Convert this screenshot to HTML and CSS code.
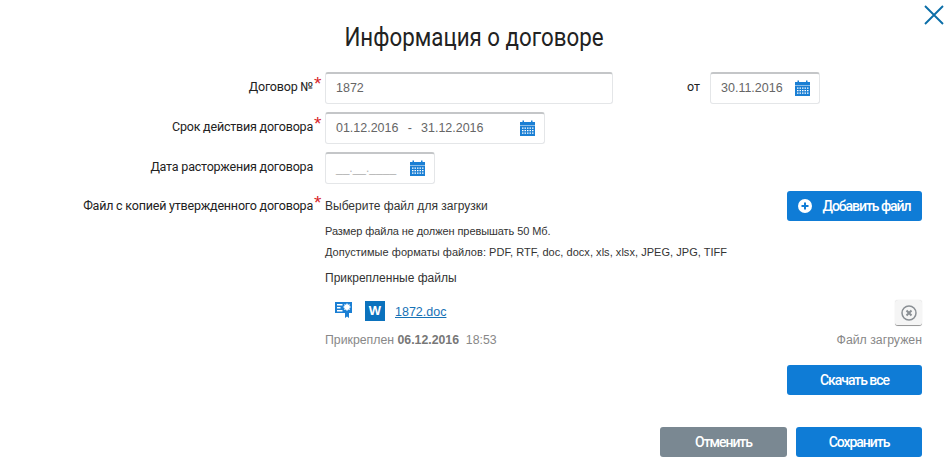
FILE: index.html
```html
<!DOCTYPE html>
<html lang="ru">
<head>
<meta charset="utf-8">
<title>Информация о договоре</title>
<link rel="stylesheet" href="styles.css">
</head>
<body>
<svg class="defs" width="0" height="0"><defs>
<symbol id="cal" viewBox="0 0 15 16">
<path fill="#1a7fd4" d="M0 2h2.500V0.500h1.500V2h7V0.500h1.500V2H15v3.500H0z"/>
<path fill="#1a7fd4" fill-rule="evenodd" d="M0 6h15v10H0zM2 7.500v1.200h1.500V7.500zM4.500 7.500v1.200h1.500V7.500zM7 7.500v1.200h1.500V7.500zM9.500 7.500v1.200h1.500V7.500zM12 7.500v1.200h1.500V7.500zM2 10v1.200h1.500V10zM4.500 10v1.200h1.500V10zM7 10v1.200h1.500V10zM9.500 10v1.200h1.500V10zM12 10v1.200h1.500V10zM2 12.500v1.200h1.500v-1.200zM4.500 12.500v1.200h1.500v-1.200zM7 12.500v1.200h1.500v-1.200zM9.500 12.500v1.200h1.500v-1.200zM12 12.500v1.200h1.500v-1.200z"/>
</symbol>
</defs></svg>
<main class="dialog">
  <button class="close" aria-label="Закрыть"><svg width="20" height="20" viewBox="0 0 20 20"><path d="M1 1l18 18M19 1L1 19" stroke="#0b6ea8" stroke-width="1.900" fill="none"/></svg></button>
  <h1 class="title">Информация о договоре</h1>

  <div class="row">
    <label class="label req">Договор №</label>
    <div class="field field-number">1872</div>
    <span class="from">от</span>
    <div class="field field-date">30.11.2016<svg class="cal"><use href="#cal"/></svg></div>
  </div>
  <div class="row">
    <label class="label req">Срок действия договора</label>
    <div class="field field-range"><span class="range">01.12.2016&nbsp;&nbsp; - &nbsp;&nbsp;31.12.2016</span><svg class="cal"><use href="#cal"/></svg></div>
  </div>
  <div class="row row-last">
    <label class="label">Дата расторжения договора</label>
    <div class="field field-date"><span class="mask">__.__.____</span><svg class="cal"><use href="#cal"/></svg></div>
  </div>

  <div class="row row-file">
    <label class="label req label-file">Файл с копией утвержденного договора</label>
    <div class="file-col">
      <div class="file-head">
        <div class="hints">
          <p class="choose">Выберите файл для загрузки</p>
          <p class="hint hint-size">Размер файла не должен превышать 50 Мб.</p>
          <p class="hint hint-formats">Допустимые форматы файлов: PDF, RTF, doc, docx, xls, xlsx, JPEG, JPG, TIFF</p>
        </div>
        <button class="btn btn-add"><svg width="14" height="14" viewBox="0 0 14 14"><circle cx="7" cy="7" r="7" fill="#fff"/><path d="M3.500 7h7M7 3.500v7" stroke="#0f7cd6" stroke-width="2"/></svg>Добавить файл</button>
      </div>
      <p class="attached">Прикрепленные файлы</p>
      <div class="file-item">
        <svg class="sig" width="17" height="16" viewBox="0 0 17 16"><path fill="#1a7fd4" d="M0 0h17v11h-3v5l-2-1.500-2 1.500v-5H0z"/><path fill="#fff" d="M2 2h5.500v1.500H2zM2 5h3.500v1.500H2zM2 8h5.500v1.500H2zM12 1l1 1.700 1.900-.5-.5 1.900 1.700 1-1.700 1 .5 1.900-1.900-.5-1 1.700-1-1.700-1.900.5.500-1.900-1.700-1 1.700-1-.5-1.900 1.900.5z"/></svg>
        <span class="word">W</span>
        <a class="file-link" href="#">1872.doc</a>
        <button class="remove" aria-label="Удалить"><svg width="16" height="16" viewBox="0 0 16 16"><circle cx="8" cy="8" r="7" fill="none" stroke="#8a8f94" stroke-width="1.500"/><path d="M5.500 5.500l5 5M10.500 5.500l-5 5" stroke="#8a8f94" stroke-width="2"/></svg></button>
      </div>
      <div class="file-meta">
        <span>Прикреплен <b>06.12.2016</b>&nbsp; 18:53</span>
        <span>Файл загружен</span>
      </div>
      <div class="download"><button class="btn btn-all">Скачать все</button></div>
    </div>
  </div>

  <div class="actions">
    <button class="btn btn-cancel">Отменить</button>
    <button class="btn btn-save">Сохранить</button>
  </div>
</main>
</body>
</html>
```
FILE: styles.css
```css
* { box-sizing: border-box; }
html, body { margin: 0; padding: 0; background: #fff; }
body { font-family: "Liberation Sans", Arial, sans-serif; color: #333; overflow: hidden; }
.defs { position: absolute; }
.dialog { position: relative; width: 948px; height: 471px; padding: 21px 26px 0 0; }
.close { position: absolute; top: 5px; right: 4px; padding: 0; border: 0; background: none; line-height: 0; }
.title { margin: 0 0 18px; width: 948px; text-align: center; font: 400 25px/33px Roboto, sans-serif; color: #222; transform: scaleX(0.893); }
.row { display: flex; align-items: flex-start; margin-bottom: 8px; }
.row-last { margin-bottom: 7px; }
.label { width: 313px; flex: none; margin-right: 12px; text-align: right; font: 400 12.500px/30px Roboto, sans-serif; letter-spacing: -0.200px; color: #222; position: relative; }
.label.req::after { content: "*"; position: absolute; left: 100%; top: -3px; color: #d8232a; font: 400 19px/30px "Liberation Sans", sans-serif; letter-spacing: 0; padding-left: 1px; }
.field { height: 32px; border: 1px solid #e4e6e8; border-top: 2px solid #c4c6c8; border-radius: 3px; display: flex; align-items: center; justify-content: space-between; padding: 0 9px 2px 10px; font-size: 12.500px; color: #666; flex: none; }
.field-number { width: 288px; }
.field-range { width: 220px; }
.field-date { width: 110px; }
.range { word-spacing: -0.350px; letter-spacing: -0.020px; }
.from { margin-left: 74px; width: 23px; font: 400 12.500px/30px Roboto, sans-serif; color: #222; }
.cal { width: 15px; height: 16px; flex: none; }
.mask { color: #b5b5b5; font-size: 12px; }
.row-file { margin: 0; }
.label-file { line-height: 18px; padding-top: 6px; }
.file-col { flex: 1; display: flex; flex-direction: column; }
.file-head { display: flex; justify-content: space-between; align-items: flex-start; }
.hints { padding-top: 8px; }
.choose { margin: 0 0 10px; font-size: 12px; line-height: 15px; color: #333; }
.hint { margin: 0 0 6px; font-size: 11px; line-height: 15px; color: #333; }
.hint-size { letter-spacing: -0.080px; }
.hint-formats { letter-spacing: 0.040px; }
.btn { border: 0; border-radius: 3px; color: #fff; font: 500 14px/30px Roboto, sans-serif; letter-spacing: -1.050px; height: 30px; padding: 0; background: #0f7cd6; cursor: pointer; }
.btn-add { width: 135px; display: flex; align-items: center; justify-content: center; gap: 10px; }
.attached { margin: 5px 0 0; font-size: 12px; line-height: 15px; color: #333; }
.file-item { display: flex; align-items: flex-start; height: 26px; margin-top: 14px; padding-left: 10px; }
.sig { flex: none; margin-right: 13px; margin-top: 2px; }
.word { width: 20px; height: 20px; margin-top: 1px; background: #0b72bd; color: #fff; font: 700 13px/20px "Liberation Sans", sans-serif; text-align: center; flex: none; }
.file-link { margin-left: 10px; margin-top: 5px; font-size: 12.500px; line-height: 15px; color: #1772b6; }
.remove { margin-left: auto; width: 27px; height: 26px; padding: 0; border: 0; border-bottom: 1px solid #999; border-radius: 3px; background: #f5f5f5; display: flex; align-items: center; justify-content: center; box-shadow: 0 0 1px #ccc; }
.file-meta { display: flex; justify-content: space-between; margin-top: 7px; font-size: 12.300px; line-height: 15px; color: #888; }
.file-meta b { color: #777; }
.download { display: flex; justify-content: flex-end; margin-top: 17px; }
.btn-all { width: 135px; }
.actions { display: flex; justify-content: flex-end; gap: 9px; margin-top: 32px; }
.btn-cancel { width: 127px; background: #7a8892; }
.btn-save { width: 126px; }
```
